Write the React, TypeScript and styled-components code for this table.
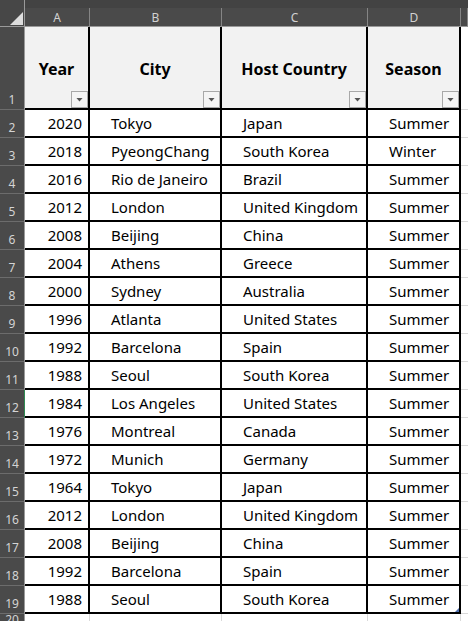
import React from 'react';
import styled, { createGlobalStyle } from 'styled-components';

const Global = createGlobalStyle`
  html, body { margin: 0; padding: 0; background: #ffffff; overflow: hidden; }
  body { font-family: "Noto Sans", "Open Sans", sans-serif; }
  * { box-sizing: border-box; }
`;

const Sheet = styled.div`
  display: grid;
  grid-template-columns: 25px 65px 132px 146px 93px 1fr;
  grid-template-rows: 8px 19px 83px repeat(18, 28px) 1fr;
  width: 468px;
  height: 621px;
  overflow: hidden;
  background: #ffffff;
`;

const TopBand = styled.div`
  grid-column: 2 / -1;
  grid-row: 1;
  background: #434343;
`;

const Corner = styled.div`
  grid-column: 1;
  grid-row: 1 / 3;
  background: #474747;
  border-right: 1px solid #9a9a9a;
  border-bottom: 1px solid #9a9a9a;
  display: flex;
  align-items: flex-end;
  justify-content: flex-end;
  padding: 0 1px 1px 0;
`;

const CornerTriangle = styled.div`
  width: 13px;
  height: 13px;
  background: #dedede;
  clip-path: polygon(100% 0, 100% 100%, 0 100%);
`;

const ColHeader = styled.div`
  grid-row: 2;
  background: #4a4a4a;
  color: #d2d2d2;
  font-size: 12px;
  display: flex;
  align-items: center;
  justify-content: center;
  border-right: 1px solid #858585;
  border-bottom: 1px solid #9a9a9a;
`;

const RowHeader = styled.div<{ $active?: boolean }>`
  background: #4a4a4a;
  color: #d4d4d4;
  font-size: 12px;
  display: flex;
  align-items: flex-end;
  justify-content: center;
  padding-bottom: 3px;
  border-right: 1px solid ${(p) => (p.$active ? '#2f8a52' : '#9a9a9a')};
  border-bottom: 1px solid #6c6c6c;
  line-height: 1;
`;

const HeaderCell = styled.div`
  position: relative;
  background: #f2f2f2;
  color: #000;
  font-weight: 700;
  font-size: 16px;
  display: flex;
  align-items: center;
  justify-content: center;
  border-right: 2px solid #000;
  border-bottom: 2px solid #000;
  padding-top: 2px;
`;

const FilterButton = styled.div`
  position: absolute;
  right: 0;
  bottom: 0;
  width: 17px;
  height: 17px;
  border: 1px solid #a8a8a8;
  background: #f4f4f4;
  display: flex;
  align-items: center;
  justify-content: center;
`;

const FilterArrow = styled.div`
  width: 7px;
  height: 4px;
  background: #555555;
  clip-path: polygon(0 0, 100% 0, 50% 100%);
`;

const DataCell = styled.div<{ $align: 'left' | 'right' }>`
  position: relative;
  background: #ffffff;
  color: #000;
  font-size: 15px;
  display: flex;
  align-items: center;
  justify-content: ${(p) => (p.$align === 'right' ? 'flex-end' : 'flex-start')};
  padding: 0 ${(p) => (p.$align === 'right' ? '6px' : '0')} 0 ${(p) => (p.$align === 'right' ? '0' : '21px')};
  border-right: 2px solid #000;
  border-bottom: 2px solid #000;
  white-space: nowrap;
  overflow: hidden;
`;

const ResizeHandle = styled.div`
  position: absolute;
  right: 0;
  bottom: 0;
  width: 4px;
  height: 4px;
  background: #4f6fae;
  clip-path: polygon(100% 0, 100% 100%, 0 100%);
`;

const GridCell = styled.div<{ $right?: boolean }>`
  background: #ffffff;
  border-bottom: 1px solid #dadada;
  border-right: ${(p) => (p.$right ? '1px solid #dadada' : 'none')};
`;

type Row = [string, string, string, string];

const rows: Row[] = [
  ['2020', 'Tokyo', 'Japan', 'Summer'],
  ['2018', 'PyeongChang', 'South Korea', 'Winter'],
  ['2016', 'Rio de Janeiro', 'Brazil', 'Summer'],
  ['2012', 'London', 'United Kingdom', 'Summer'],
  ['2008', 'Beijing', 'China', 'Summer'],
  ['2004', 'Athens', 'Greece', 'Summer'],
  ['2000', 'Sydney', 'Australia', 'Summer'],
  ['1996', 'Atlanta', 'United States', 'Summer'],
  ['1992', 'Barcelona', 'Spain', 'Summer'],
  ['1988', 'Seoul', 'South Korea', 'Summer'],
  ['1984', 'Los Angeles', 'United States', 'Summer'],
  ['1976', 'Montreal', 'Canada', 'Summer'],
  ['1972', 'Munich', 'Germany', 'Summer'],
  ['1964', 'Tokyo', 'Japan', 'Summer'],
  ['2012', 'London', 'United Kingdom', 'Summer'],
  ['2008', 'Beijing', 'China', 'Summer'],
  ['1992', 'Barcelona', 'Spain', 'Summer'],
  ['1988', 'Seoul', 'South Korea', 'Summer'],
];

const columns = ['A', 'B', 'C', 'D', ''];
const headers = ['Year', 'City', 'Host Country', 'Season'];

export default function App() {
  return (
    <>
      <Global />
      <Sheet>
        <Corner>
          <CornerTriangle />
        </Corner>
        <TopBand />
        {columns.map((c, i) => (
          <ColHeader key={`col-${i}`}>{c}</ColHeader>
        ))}

        <RowHeader>1</RowHeader>
        {headers.map((h) => (
          <HeaderCell key={h}>
            {h}
            <FilterButton>
              <FilterArrow />
            </FilterButton>
          </HeaderCell>
        ))}
        <GridCell />

        {rows.map((r, i) => (
          <React.Fragment key={`row-${i}`}>
            <RowHeader $active={i + 2 === 12}>{i + 2}</RowHeader>
            <DataCell $align="right">{r[0]}</DataCell>
            <DataCell $align="left">{r[1]}</DataCell>
            <DataCell $align="left">{r[2]}</DataCell>
            <DataCell $align="left">
              {r[3]}
              {i === rows.length - 1 && <ResizeHandle />}
            </DataCell>
            <GridCell />
          </React.Fragment>
        ))}

        <RowHeader>20</RowHeader>
        <GridCell $right />
        <GridCell $right />
        <GridCell $right />
        <GridCell $right />
        <GridCell />
      </Sheet>
    </>
  );
}
